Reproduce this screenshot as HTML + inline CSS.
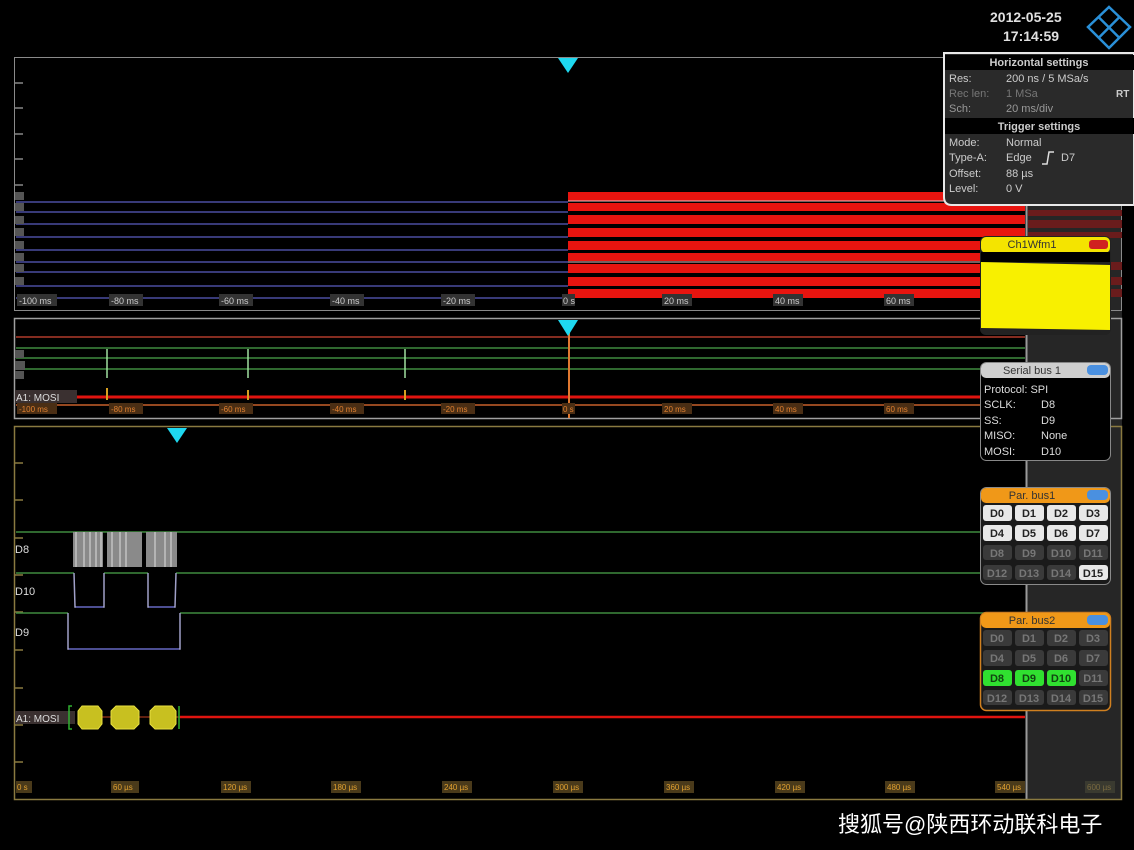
<!DOCTYPE html>
<html><head><meta charset="utf-8"><style>
html,body{margin:0;padding:0;background:#000;width:1134px;height:850px;overflow:hidden}
svg{display:block}
text{font-family:"Liberation Sans","DejaVu Sans",sans-serif}
</style></head><body>
<svg width="1134" height="850" viewBox="0 0 1134 850" xmlns="http://www.w3.org/2000/svg">
<rect width="1134" height="850" fill="#000"/>
<rect x="1026" y="205" width="96" height="595" fill="#262626"/>
<line x1="1026.5" y1="205" x2="1026.5" y2="800" stroke="#9a9a9a" stroke-width="2"/>

<!-- Panel 1 -->
<rect x="14.5" y="57.5" width="1107" height="253" fill="none" stroke="#8a8a8a"/>
<g stroke="#888" stroke-width="1.5">
<line x1="14" y1="83" x2="23" y2="83"/><line x1="14" y1="108" x2="23" y2="108"/><line x1="14" y1="134" x2="23" y2="134"/><line x1="14" y1="159" x2="23" y2="159"/><line x1="14" y1="185" x2="23" y2="185"/>
</g>
<g stroke="#4a4ea0" stroke-width="1.5">
<line x1="16" y1="202" x2="568" y2="202"/><line x1="16" y1="212" x2="568" y2="212"/><line x1="16" y1="224" x2="568" y2="224"/><line x1="16" y1="237" x2="568" y2="237"/><line x1="16" y1="250" x2="568" y2="250"/><line x1="16" y1="262" x2="568" y2="262"/><line x1="16" y1="272" x2="568" y2="272"/><line x1="16" y1="286" x2="568" y2="286"/><line x1="16" y1="298" x2="568" y2="298"/>
</g>
<g fill="#555"><rect x="15" y="192" width="9" height="8"/><rect x="15" y="203" width="9" height="8"/><rect x="15" y="216" width="9" height="8"/><rect x="15" y="228" width="9" height="8"/><rect x="15" y="241" width="9" height="8"/><rect x="15" y="253" width="9" height="8"/><rect x="15" y="264" width="9" height="8"/><rect x="15" y="277" width="9" height="8"/></g>
<g fill="#e8140f">
<rect x="568" y="192" width="457" height="9"/><rect x="568" y="203" width="457" height="8"/><rect x="568" y="215" width="457" height="9"/><rect x="568" y="228" width="457" height="9"/><rect x="568" y="241" width="457" height="9"/><rect x="568" y="253" width="457" height="8"/><rect x="568" y="264" width="457" height="9"/><rect x="568" y="277" width="457" height="9"/><rect x="568" y="289" width="457" height="9"/>
</g>
<g fill="#6a1c1c">
<rect x="1028" y="210" width="94" height="6"/><rect x="1028" y="220" width="94" height="8"/><rect x="1028" y="232" width="94" height="6"/><rect x="1028" y="262" width="94" height="8"/><rect x="1028" y="277" width="94" height="8"/><rect x="1028" y="289" width="94" height="8"/>
</g>
<line x1="568" y1="201" x2="1025" y2="201" stroke="#f0c0c0" stroke-width="1"/>
<line x1="568" y1="262" x2="1025" y2="262" stroke="#f0c0c0" stroke-width="1"/>
<polygon points="558,58 578,58 568,73" fill="#1ed8f0"/>
<g font-size="9" fill="#ccc">
<rect x="17" y="294" width="40" height="12" fill="#333"/><text x="19" y="304">-100 ms</text>
<rect x="109" y="294" width="34" height="12" fill="#333"/><text x="111" y="304">-80 ms</text>
<rect x="219" y="294" width="34" height="12" fill="#333"/><text x="221" y="304">-60 ms</text>
<rect x="330" y="294" width="34" height="12" fill="#333"/><text x="332" y="304">-40 ms</text>
<rect x="441" y="294" width="34" height="12" fill="#333"/><text x="443" y="304">-20 ms</text>
<rect x="562" y="294" width="13" height="12" fill="#333"/><text x="563" y="304">0 s</text>
<rect x="662" y="294" width="30" height="12" fill="#333"/><text x="664" y="304">20 ms</text>
<rect x="773" y="294" width="30" height="12" fill="#333"/><text x="775" y="304">40 ms</text>
<rect x="884" y="294" width="30" height="12" fill="#333"/><text x="886" y="304">60 ms</text>
</g>

<!-- Panel 2 -->
<rect x="14.5" y="318.5" width="1107" height="100" fill="none" stroke="#a0a0a0" stroke-width="1.5"/>
<line x1="16" y1="337" x2="1025" y2="337" stroke="#b03a2a" stroke-width="1.5"/>
<g stroke="#3f8a3f" stroke-width="1.5">
<line x1="16" y1="348" x2="1025" y2="348"/><line x1="16" y1="358" x2="1025" y2="358"/><line x1="16" y1="369" x2="1025" y2="369"/>
</g>
<g stroke="#a0e0a0" stroke-width="1.5"><line x1="107" y1="349" x2="107" y2="378"/><line x1="248" y1="349" x2="248" y2="378"/><line x1="405" y1="349" x2="405" y2="378"/></g>
<line x1="16" y1="397" x2="1025" y2="397" stroke="#e0140f" stroke-width="3"/>
<line x1="16" y1="405" x2="1025" y2="405" stroke="#c8602a" stroke-width="1.5"/>
<g stroke="#d8a020" stroke-width="2"><line x1="107" y1="388" x2="107" y2="400"/><line x1="248" y1="390" x2="248" y2="400"/><line x1="405" y1="390" x2="405" y2="400"/></g>
<line x1="569" y1="330" x2="569" y2="418" stroke="#e07830" stroke-width="2"/>
<polygon points="558,320 578,320 568,336" fill="#1ed8f0"/>
<g fill="#555"><rect x="15" y="350" width="9" height="8"/><rect x="15" y="361" width="10" height="9"/><rect x="15" y="371" width="9" height="8"/></g>
<rect x="15" y="390" width="62" height="13" fill="#3a3030"/>
<text x="16" y="401" font-size="10" fill="#ddd">A1: MOSI</text>
<g font-size="8" fill="#e08030">
<rect x="17" y="403" width="40" height="11" fill="#4a2e14"/><text x="19" y="412">-100 ms</text>
<rect x="109" y="403" width="34" height="11" fill="#4a2e14"/><text x="111" y="412">-80 ms</text>
<rect x="219" y="403" width="34" height="11" fill="#4a2e14"/><text x="221" y="412">-60 ms</text>
<rect x="330" y="403" width="34" height="11" fill="#4a2e14"/><text x="332" y="412">-40 ms</text>
<rect x="441" y="403" width="34" height="11" fill="#4a2e14"/><text x="443" y="412">-20 ms</text>
<rect x="562" y="403" width="13" height="11" fill="#4a2e14"/><text x="563" y="412">0 s</text>
<rect x="662" y="403" width="30" height="11" fill="#4a2e14"/><text x="664" y="412">20 ms</text>
<rect x="773" y="403" width="30" height="11" fill="#4a2e14"/><text x="775" y="412">40 ms</text>
<rect x="884" y="403" width="30" height="11" fill="#4a2e14"/><text x="886" y="412">60 ms</text>
</g>

<!-- Panel 3 -->
<rect x="14.5" y="426.5" width="1107" height="373" fill="none" stroke="#8a7a40" stroke-width="1.5"/>
<g stroke="#8a7a40" stroke-width="1.5">
<line x1="14" y1="463" x2="23" y2="463"/><line x1="14" y1="500" x2="23" y2="500"/><line x1="14" y1="538" x2="23" y2="538"/><line x1="14" y1="575" x2="23" y2="575"/><line x1="14" y1="612" x2="23" y2="612"/><line x1="14" y1="650" x2="23" y2="650"/><line x1="14" y1="688" x2="23" y2="688"/><line x1="14" y1="725" x2="23" y2="725"/><line x1="14" y1="762" x2="23" y2="762"/>
</g>
<polygon points="167,428 187,428 177,443" fill="#1ed8f0"/>
<g stroke="#3f8a3f" stroke-width="1.5" fill="none">
<line x1="16" y1="532" x2="1025" y2="532"/>
<polyline points="16,573 74,573"/><polyline points="104,573 148,573"/><polyline points="176,573 1025,573"/>
<polyline points="16,613 68,613"/><polyline points="180,613 1025,613"/>
</g>
<g fill="#8a8a8a"><rect x="73" y="532" width="30" height="35"/><rect x="107" y="532" width="35" height="35"/><rect x="146" y="532" width="31" height="35"/></g>
<g stroke="#ddd" stroke-width="1"><line x1="76" y1="532" x2="76" y2="567"/><line x1="84" y1="532" x2="84" y2="567"/><line x1="90" y1="532" x2="90" y2="567"/><line x1="96" y1="532" x2="96" y2="567"/><line x1="101" y1="532" x2="101" y2="567"/><line x1="112" y1="532" x2="112" y2="567"/><line x1="120" y1="532" x2="120" y2="567"/><line x1="126" y1="532" x2="126" y2="567"/><line x1="155" y1="532" x2="155" y2="567"/><line x1="165" y1="532" x2="165" y2="567"/><line x1="171" y1="532" x2="171" y2="567"/></g>
<g fill="none" stroke-width="1.5">
<polyline points="74,573 75,607 104,607 104,573" stroke="#a0a0c8"/>
<polyline points="148,573 148,607 175,607 176,573" stroke="#a0a0c8"/>
<polyline points="68,613 68,649 180,649 180,613" stroke="#a0a0c8"/>
</g>
<g stroke="#4a4ea0" stroke-width="1.5"><line x1="76" y1="607" x2="103" y2="607"/><line x1="149" y1="607" x2="174" y2="607"/><line x1="69" y1="649" x2="179" y2="649"/></g>
<g font-size="11" fill="#ddd"><text x="15" y="553">D8</text><text x="15" y="595">D10</text><text x="15" y="636">D9</text></g>
<line x1="180" y1="717" x2="1025" y2="717" stroke="#e0140f" stroke-width="2.5"/>
<line x1="100" y1="717" x2="180" y2="717" stroke="#c04020" stroke-width="1"/>
<rect x="15" y="711" width="60" height="13" fill="#3a3030"/>
<text x="16" y="722" font-size="10" fill="#ddd">A1: MOSI</text>
<g fill="#c8c020" stroke="#e8e040" stroke-width="1">
<polygon points="82,706 98,706 102,711 102,724 98,729 82,729 78,724 78,711"/>
<polygon points="116,706 134,706 139,711 139,724 134,729 116,729 111,724 111,711"/>
<polygon points="155,706 172,706 176,711 176,724 172,729 155,729 150,724 150,711"/>
</g>
<g stroke="#30b030" stroke-width="1.5" fill="none"><polyline points="72,706 69,706 69,729 72,729"/><line x1="179" y1="706" x2="179" y2="729"/></g>
<g font-size="8" fill="#e0a030">
<rect x="16" y="781" width="16" height="12" fill="#4a3a1a"/><text x="17" y="790">0 s</text>
<rect x="111" y="781" width="28" height="12" fill="#4a3a1a"/><text x="113" y="790">60 µs</text>
<rect x="221" y="781" width="30" height="12" fill="#4a3a1a"/><text x="223" y="790">120 µs</text>
<rect x="331" y="781" width="30" height="12" fill="#4a3a1a"/><text x="333" y="790">180 µs</text>
<rect x="442" y="781" width="30" height="12" fill="#4a3a1a"/><text x="444" y="790">240 µs</text>
<rect x="553" y="781" width="30" height="12" fill="#4a3a1a"/><text x="555" y="790">300 µs</text>
<rect x="664" y="781" width="30" height="12" fill="#4a3a1a"/><text x="666" y="790">360 µs</text>
<rect x="775" y="781" width="30" height="12" fill="#4a3a1a"/><text x="777" y="790">420 µs</text>
<rect x="885" y="781" width="30" height="12" fill="#4a3a1a"/><text x="887" y="790">480 µs</text>
<rect x="995" y="781" width="30" height="12" fill="#4a3a1a"/><text x="997" y="790">540 µs</text>
<rect x="1085" y="781" width="30" height="12" fill="#3a3a30"/><text x="1087" y="790" fill="#7a6a40">600 µs</text>
</g>

<g font-size="14" font-weight="bold" fill="#e0e0e0" font-family="Liberation Mono">
<text x="990" y="22">2012-05-25</text><text x="1003" y="41">17:14:59</text>
</g>
<g stroke="#2a90d8" stroke-width="2.5" fill="none">
<polygon points="1109,7 1130,27 1109,48 1088,27"/>
<line x1="1098.5" y1="17" x2="1119.5" y2="38"/><line x1="1119.5" y1="17" x2="1098.5" y2="38"/>
</g>

<path d="M944,53 H1134 V205 H952 Q944,205 944,197 Z" fill="#2a2a2a" stroke="#e8e8e8" stroke-width="2"/>
<rect x="945" y="55" width="189" height="15" fill="#000"/>
<rect x="945" y="118" width="189" height="16" fill="#000"/>
<g font-size="11" fill="#ccc">
<text x="1039" y="66" text-anchor="middle" font-weight="bold">Horizontal settings</text>
<text x="949" y="82">Res:</text><text x="1006" y="82">200 ns / 5 MSa/s</text>
<text x="949" y="97" fill="#777">Rec len:</text><text x="1006" y="97" fill="#777">1 MSa</text><text x="1116" y="97" font-weight="bold" font-size="10">RT</text>
<text x="949" y="112" fill="#999">Sch:</text><text x="1006" y="112" fill="#999">20 ms/div</text>
<text x="1039" y="130" text-anchor="middle" font-weight="bold">Trigger settings</text>
<text x="949" y="146">Mode:</text><text x="1006" y="146">Normal</text>
<text x="949" y="161">Type-A:</text><text x="1006" y="161">Edge</text><text x="1061" y="161">D7</text>
<text x="949" y="177">Offset:</text><text x="1006" y="177">88 µs</text>
<text x="949" y="192">Level:</text><text x="1006" y="192">0 V</text>
</g>
<polyline points="1042,164 1047,164 1049,152 1054,152" stroke="#ddd" stroke-width="1.5" fill="none"/>

<rect x="980" y="236" width="131" height="99" rx="6" fill="#222"/>
<rect x="981" y="237" width="129" height="16" rx="5" fill="#f4e400"/>
<rect x="981" y="252" width="129" height="10" fill="#000"/>
<polygon points="981,262 1110,265 1110,330 981,328" fill="#f8f000"/>
<text x="1032" y="248" font-size="11" text-anchor="middle" fill="#333">Ch1Wfm1</text>
<rect x="1089" y="240" width="19" height="9" rx="3" fill="#d02020"/>

<rect x="980.5" y="362.5" width="130" height="98" rx="6" fill="#000" stroke="#888"/>
<rect x="981" y="363" width="129" height="15" rx="5" fill="#cfcfcf"/>
<text x="1032" y="374" font-size="11" text-anchor="middle" fill="#333">Serial bus 1</text>
<rect x="1087" y="365" width="21" height="10" rx="4" fill="#4a90e0"/>
<g font-size="11" fill="#ddd">
<text x="984" y="393">Protocol: SPI</text>
<text x="984" y="408">SCLK:</text><text x="1041" y="408">D8</text>
<text x="984" y="424">SS:</text><text x="1041" y="424">D9</text>
<text x="984" y="439">MISO:</text><text x="1041" y="439">None</text>
<text x="984" y="455">MOSI:</text><text x="1041" y="455">D10</text>
</g>

<rect x="980.5" y="487.5" width="130" height="97" rx="6" fill="#1a1a1a" stroke="#8a8a8a"/>
<rect x="981" y="488" width="129" height="15" rx="5" fill="#f09818"/>
<text x="1032" y="499" font-size="11" text-anchor="middle" fill="#333">Par. bus1</text>
<rect x="1087" y="490" width="21" height="10" rx="4" fill="#4a90e0"/>
<g font-size="11" font-weight="bold" text-anchor="middle">
<rect x="983" y="505" width="29" height="16" rx="3" fill="#e8e8e8"/><text x="997" y="517" fill="#222">D0</text>
<rect x="1015" y="505" width="29" height="16" rx="3" fill="#e8e8e8"/><text x="1029" y="517" fill="#222">D1</text>
<rect x="1047" y="505" width="29" height="16" rx="3" fill="#e8e8e8"/><text x="1061" y="517" fill="#222">D2</text>
<rect x="1079" y="505" width="29" height="16" rx="3" fill="#e8e8e8"/><text x="1093" y="517" fill="#222">D3</text>
<rect x="983" y="525" width="29" height="16" rx="3" fill="#e8e8e8"/><text x="997" y="537" fill="#222">D4</text>
<rect x="1015" y="525" width="29" height="16" rx="3" fill="#e8e8e8"/><text x="1029" y="537" fill="#222">D5</text>
<rect x="1047" y="525" width="29" height="16" rx="3" fill="#e8e8e8"/><text x="1061" y="537" fill="#222">D6</text>
<rect x="1079" y="525" width="29" height="16" rx="3" fill="#e8e8e8"/><text x="1093" y="537" fill="#222">D7</text>
<rect x="983" y="545" width="29" height="15" rx="3" fill="#3a3a3a"/><text x="997" y="557" fill="#777">D8</text>
<rect x="1015" y="545" width="29" height="15" rx="3" fill="#3a3a3a"/><text x="1029" y="557" fill="#777">D9</text>
<rect x="1047" y="545" width="29" height="15" rx="3" fill="#3a3a3a"/><text x="1061" y="557" fill="#777">D10</text>
<rect x="1079" y="545" width="29" height="15" rx="3" fill="#3a3a3a"/><text x="1093" y="557" fill="#777">D11</text>
<rect x="983" y="565" width="29" height="15" rx="3" fill="#3a3a3a"/><text x="997" y="577" fill="#777">D12</text>
<rect x="1015" y="565" width="29" height="15" rx="3" fill="#3a3a3a"/><text x="1029" y="577" fill="#777">D13</text>
<rect x="1047" y="565" width="29" height="15" rx="3" fill="#3a3a3a"/><text x="1061" y="577" fill="#777">D14</text>
<rect x="1079" y="565" width="29" height="15" rx="3" fill="#e8e8e8"/><text x="1093" y="577" fill="#222">D15</text>
</g>

<rect x="980.5" y="612.5" width="130" height="98" rx="6" fill="#1a1a1a" stroke="#d08020" stroke-width="1.5"/>
<rect x="981" y="613" width="129" height="15" rx="5" fill="#f09818"/>
<text x="1032" y="624" font-size="11" text-anchor="middle" fill="#333">Par. bus2</text>
<rect x="1087" y="615" width="21" height="10" rx="4" fill="#4a90e0"/>
<g font-size="11" font-weight="bold" text-anchor="middle">
<rect x="983" y="630" width="29" height="16" rx="3" fill="#3a3a3a"/><text x="997" y="642" fill="#777">D0</text>
<rect x="1015" y="630" width="29" height="16" rx="3" fill="#3a3a3a"/><text x="1029" y="642" fill="#777">D1</text>
<rect x="1047" y="630" width="29" height="16" rx="3" fill="#3a3a3a"/><text x="1061" y="642" fill="#777">D2</text>
<rect x="1079" y="630" width="29" height="16" rx="3" fill="#3a3a3a"/><text x="1093" y="642" fill="#777">D3</text>
<rect x="983" y="650" width="29" height="16" rx="3" fill="#3a3a3a"/><text x="997" y="662" fill="#777">D4</text>
<rect x="1015" y="650" width="29" height="16" rx="3" fill="#3a3a3a"/><text x="1029" y="662" fill="#777">D5</text>
<rect x="1047" y="650" width="29" height="16" rx="3" fill="#3a3a3a"/><text x="1061" y="662" fill="#777">D6</text>
<rect x="1079" y="650" width="29" height="16" rx="3" fill="#3a3a3a"/><text x="1093" y="662" fill="#777">D7</text>
<rect x="983" y="670" width="29" height="16" rx="3" fill="#30e030"/><text x="997" y="682" fill="#114411">D8</text>
<rect x="1015" y="670" width="29" height="16" rx="3" fill="#30e030"/><text x="1029" y="682" fill="#114411">D9</text>
<rect x="1047" y="670" width="29" height="16" rx="3" fill="#30e030"/><text x="1061" y="682" fill="#114411">D10</text>
<rect x="1079" y="670" width="29" height="16" rx="3" fill="#3a3a3a"/><text x="1093" y="682" fill="#777">D11</text>
<rect x="983" y="690" width="29" height="15" rx="3" fill="#3a3a3a"/><text x="997" y="702" fill="#777">D12</text>
<rect x="1015" y="690" width="29" height="15" rx="3" fill="#3a3a3a"/><text x="1029" y="702" fill="#777">D13</text>
<rect x="1047" y="690" width="29" height="15" rx="3" fill="#3a3a3a"/><text x="1061" y="702" fill="#777">D14</text>
<rect x="1079" y="690" width="29" height="15" rx="3" fill="#3a3a3a"/><text x="1093" y="702" fill="#777">D15</text>
</g>

<text x="838" y="832" font-size="22" fill="#fff" font-family="'Liberation Sans','Noto Sans CJK SC',sans-serif">搜狐号@陕西环动联科电子</text>
</svg>
</body></html>
